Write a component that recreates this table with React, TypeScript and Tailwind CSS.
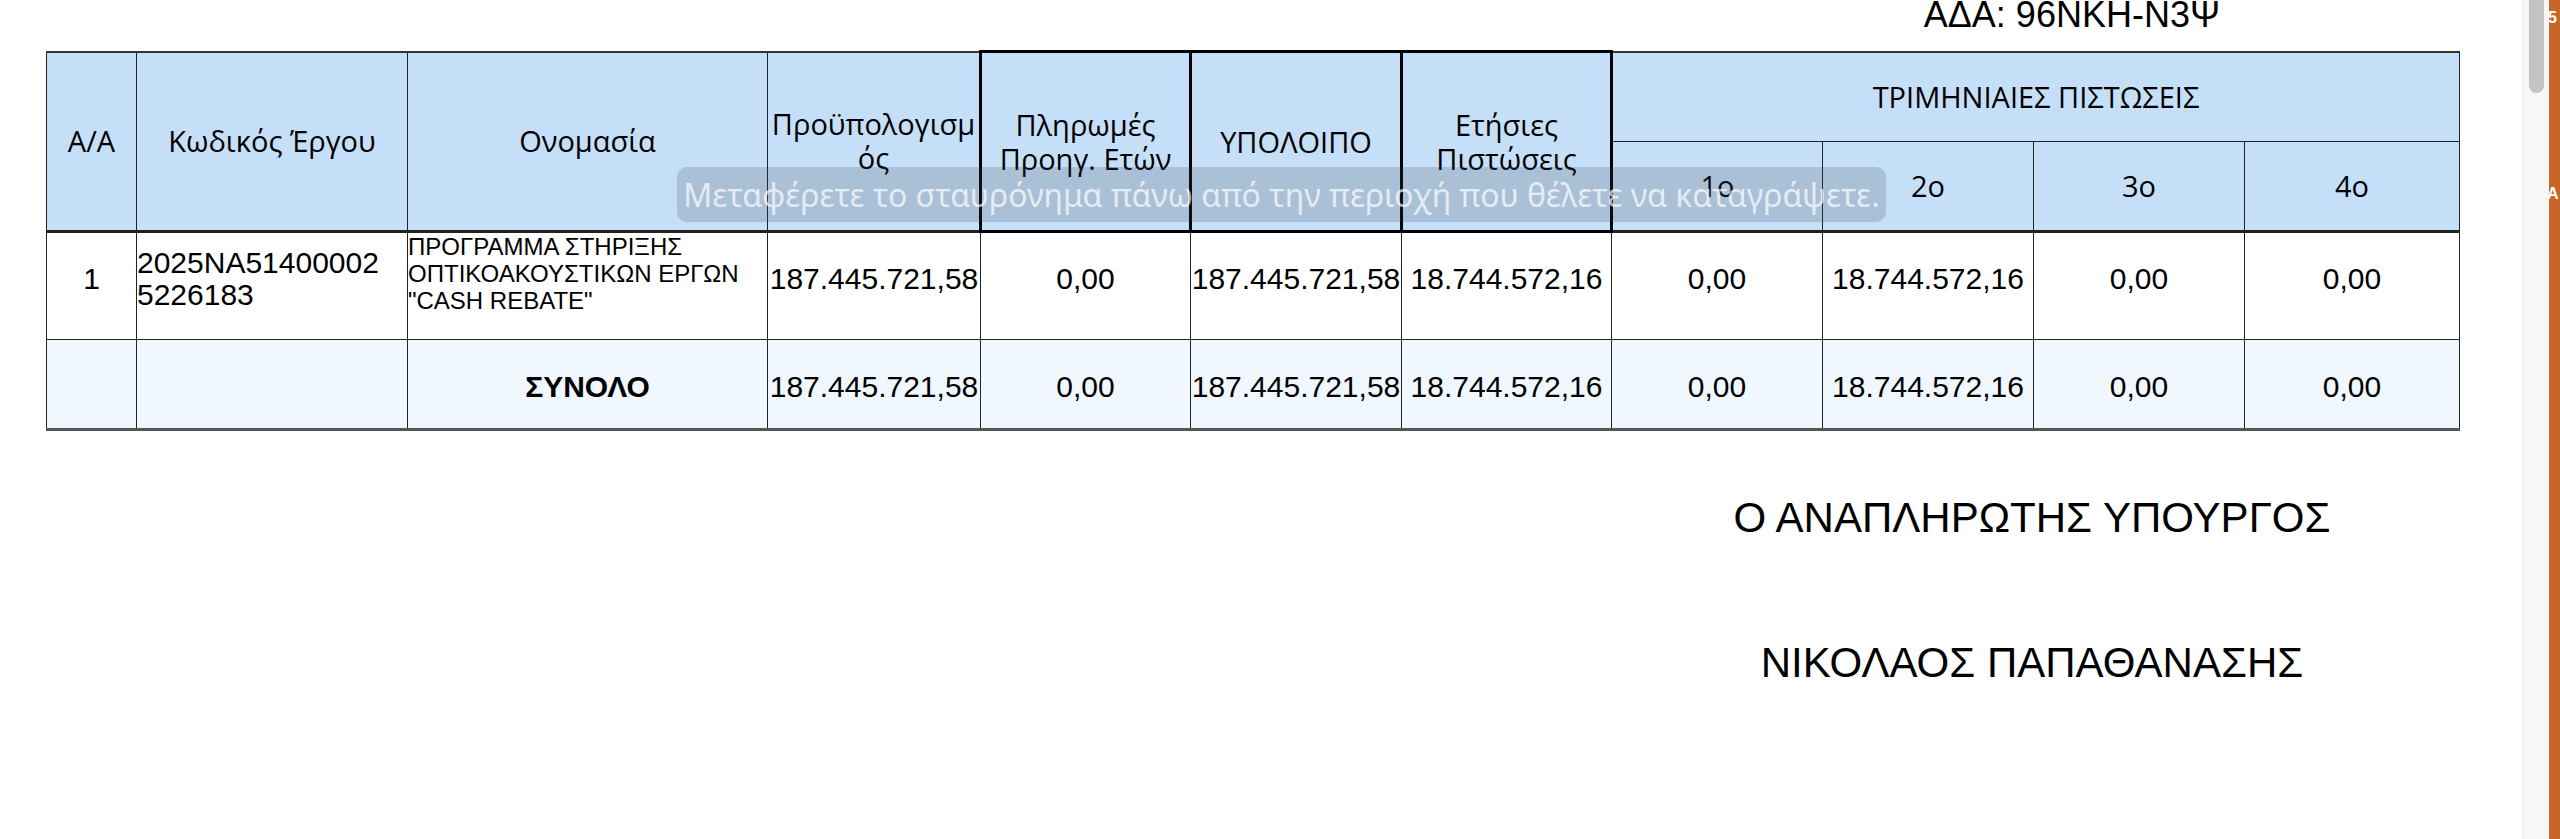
import React from 'react';

const thBase =
  "bg-[#c6dff8] p-0 text-center align-middle font-normal text-black whitespace-nowrap font-['Open_Sans',sans-serif] text-[29px] leading-[34px]";
const th = `border border-[#222] ${thBase}`;
const thThick = `border-[3px] border-black ${thBase}`;
const cell = 'border border-[#222] p-0 align-middle whitespace-nowrap';
const num = `${cell} text-center text-[30px] leading-[34px]`;

const quarters = ['1ο', '2ο', '3ο', '4ο'];

const rowValues = {
  budget: '187.445.721,58',
  paid: '0,00',
  rest: '187.445.721,58',
  yearly: '18.744.572,16',
  q: ['0,00', '18.744.572,16', '0,00', '0,00'],
};

function Scrollbar() {
  return (
    <div className="flex h-full shrink-0">
      <div className="w-[27px] h-full bg-[#f7f7f7] border-l border-[#ebebeb] flex justify-center">
        <div className="w-[15px] h-[93px] rounded-b-full bg-[#c3c3c3]" />
      </div>
      <div className="relative w-[11px] h-full overflow-hidden bg-[#c6662b] text-white font-bold text-[16px] font-['Liberation_Sans',sans-serif]">
        <span className="absolute left-[-1px] top-[6px]">5</span>
        <span className="absolute left-[-2px] top-[182px]">A</span>
      </div>
    </div>
  );
}

export default function App() {
  return (
    <div className="flex w-[2560px] h-[839px] overflow-hidden bg-white text-black font-['Liberation_Sans',Arial,sans-serif]">
      <div className="relative flex-1 h-full">
        <div className="h-[50px] flex justify-end pr-[302px]">
          <div className="text-[36px] leading-[30px] whitespace-nowrap">ΑΔΑ: 96NKH-N3Ψ</div>
        </div>

        <table className="table-fixed border-collapse w-[2413px] ml-[46px]">
          <colgroup>
            <col className="w-[90px]" />
            <col className="w-[271px]" />
            <col className="w-[360px]" />
            <col className="w-[213px]" />
            <col className="w-[210px]" />
            <col className="w-[211px]" />
            <col className="w-[210px]" />
            <col className="w-[211px]" />
            <col className="w-[211px]" />
            <col className="w-[211px]" />
            <col className="w-[215px]" />
          </colgroup>
          <thead>
            <tr className="border-t-2 border-[#333]">
              <th rowSpan={2} className={th}>Α/Α</th>
              <th rowSpan={2} className={th}>Κωδικός Έργου</th>
              <th rowSpan={2} className={th}>Ονομασία</th>
              <th rowSpan={2} className={th}>
                Προϋπολογισμ
                <br />
                ός
              </th>
              <th rowSpan={2} className={thThick}>
                Πληρωμές
                <br />
                Προηγ. Ετών
              </th>
              <th rowSpan={2} className={thThick}>ΥΠΟΛΟΙΠΟ</th>
              <th rowSpan={2} className={thThick}>
                Ετήσιες
                <br />
                Πιστώσεις
              </th>
              <th colSpan={4} className={`${th} h-[90px]`}>
                ΤΡΙΜΗΝΙΑΙΕΣ ΠΙΣΤΩΣΕΙΣ
              </th>
            </tr>
            <tr className="border-b-[3px] border-[#222]">
              {quarters.map((q) => (
                <th key={q} className={`${th} h-[90px]`}>
                  {q}
                </th>
              ))}
            </tr>
          </thead>
          <tbody>
            <tr>
              <td className={`${num} h-[108px] pb-[14px]`}>1</td>
              <td className={`${cell} text-left text-[30px] leading-[32px] pb-[14px]`}>
                <span className="block">2025NA51400002</span>
                <span className="block">5226183</span>
              </td>
              <td className="border border-[#222] p-0 align-top text-left whitespace-nowrap text-[24px] leading-[27px]">
                <span className="block">ΠΡΟΓΡΑΜΜΑ ΣΤΗΡΙΞΗΣ</span>
                <span className="block">ΟΠΤΙΚΟΑΚΟΥΣΤΙΚΩΝ ΕΡΓΩΝ</span>
                <span className="block">"CASH REBATE"</span>
              </td>
              <td className={`${num} pb-[14px]`}>{rowValues.budget}</td>
              <td className={`${num} pb-[14px]`}>{rowValues.paid}</td>
              <td className={`${num} pb-[14px]`}>{rowValues.rest}</td>
              <td className={`${num} pb-[14px]`}>{rowValues.yearly}</td>
              {rowValues.q.map((v, i) => (
                <td key={i} className={`${num} pb-[14px]`}>
                  {v}
                </td>
              ))}
            </tr>
            <tr className="bg-[#f0f7ff] border-b-[3px] border-[#555]">
              <td className={`${num} h-[90px] pt-[6px]`} />
              <td className={`${num} pt-[6px]`} />
              <td className={`${num} pt-[6px] font-bold`}>ΣΥΝΟΛΟ</td>
              <td className={`${num} pt-[6px]`}>{rowValues.budget}</td>
              <td className={`${num} pt-[6px]`}>{rowValues.paid}</td>
              <td className={`${num} pt-[6px]`}>{rowValues.rest}</td>
              <td className={`${num} pt-[6px]`}>{rowValues.yearly}</td>
              {rowValues.q.map((v, i) => (
                <td key={i} className={`${num} pt-[6px]`}>
                  {v}
                </td>
              ))}
            </tr>
          </tbody>
        </table>

        <div className="flex justify-end pr-[90px] mt-[63px]">
          <div className="w-[800px] text-center text-[42px] leading-[48px]">
            <div>Ο ΑΝΑΠΛΗΡΩΤΗΣ ΥΠΟΥΡΓΟΣ</div>
            <div className="mt-[97px]">ΝΙΚΟΛΑΟΣ ΠΑΠΑΘΑΝΑΣΗΣ</div>
          </div>
        </div>

        {/* macOS screenshot hint floating over the header */}
        <div className="absolute left-[677px] top-[167px] w-[1209px] h-[55px] rounded-[10px] bg-[#3c4655]/20 flex items-center justify-center">
          <span className="text-[32px] leading-none text-white/70 font-['Noto_Sans',sans-serif] whitespace-nowrap">
            Μεταφέρετε το σταυρόνημα πάνω από την περιοχή που θέλετε να καταγράψετε.
          </span>
        </div>
      </div>
      <Scrollbar />
    </div>
  );
}
